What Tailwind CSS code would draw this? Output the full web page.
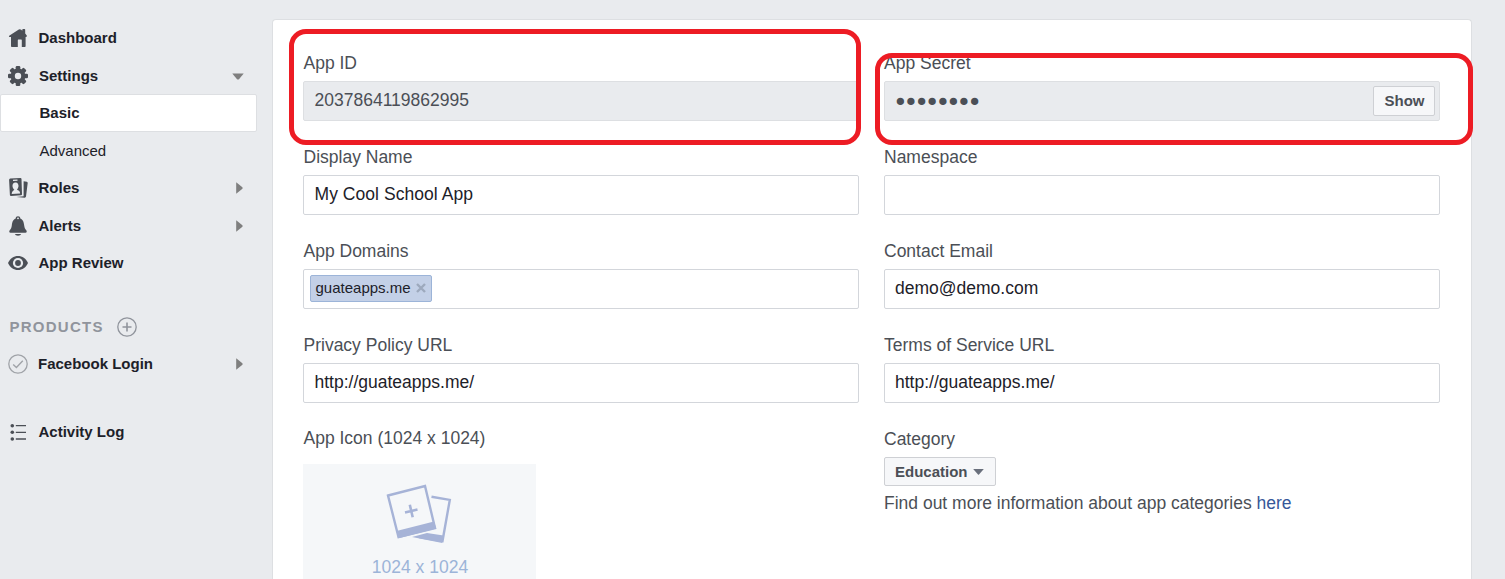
<!DOCTYPE html>
<html lang="en">
<head>
<meta charset="utf-8">
<title>Settings - Basic</title>
<script src="https://cdn.jsdelivr.net/npm/@tailwindcss/browser@4"></script>
</head>
<body class="relative flex h-[579px] w-[1505px] overflow-hidden bg-[#e9ebee] font-['Liberation_Sans',Arial,sans-serif] text-[17.5px] text-[#4b4f56]">

<nav class="w-[257px] shrink-0 pt-[19px] text-[15px] font-bold text-[#1d2129]">
  <a class="flex h-[38px] items-center gap-[10.5px] pl-2">
    <svg class="size-5" viewBox="0 0 20 20" fill="#4b4f56"><path d="M10.8 1.6Q12 .8 13.2 1.8L14.3 2.8V1.8Q14.3 1 15.1 1H16.5Q17.2 1 17.2 1.8V5.4L18.8 7.6Q19.2 8.9 18 8.9H17.6V18.2Q17.6 19 16.8 19H13.8V12.2Q13.8 11.6 13.2 11.6H10.3Q9.8 11.6 9.8 12.2V19H3.9Q3 19 3 18.2V9H1.5Q.4 8.7 1.2 7.7Z"/></svg>
    Dashboard
  </a>
  <a class="flex h-[37px] items-center gap-[11px] pl-2 pr-[13px] pt-px">
    <svg class="size-5" viewBox="0 0 20 20"><g fill="#4b4f56"><rect x="7.7" y="0" width="4.6" height="20" rx="1.2"/><rect x="7.7" y="0" width="4.6" height="20" rx="1.2" transform="rotate(45 10 10)"/><rect x="7.7" y="0" width="4.6" height="20" rx="1.2" transform="rotate(90 10 10)"/><rect x="7.7" y="0" width="4.6" height="20" rx="1.2" transform="rotate(135 10 10)"/><circle cx="10" cy="10" r="7.4"/></g><circle cx="10" cy="10" r="3.2" fill="#e9ebee"/></svg>
    <span class="grow">Settings</span>
    <svg class="h-[7px] w-3" viewBox="0 0 12 7" fill="#7f7f7f"><path d="M.3.5H11.7L7 6.2Q6 7 5 6.2Z"/></svg>
  </a>
  <a class="flex h-[38px] items-center rounded-[2px] border border-[#dddfe2] bg-white pl-[38.5px]">Basic</a>
  <a class="flex h-[37px] items-center pl-[39.5px] pt-[2px] font-normal">Advanced</a>
  <a class="flex h-[38px] items-center gap-[10.5px] pl-2 pr-[14px]">
    <svg class="size-5" viewBox="0 0 20 20"><path d="M2.2.6 12.4 0Q13.5 0 13.5 1L14 16.3Q14 17.2 13 17.3L3 18Q2 18 1.9 17L1.1 2Q1.1.8 2.2.6Z" fill="#4b4f56"/><path d="M5 2.4 9.5 2.1" stroke="#e9ebee" stroke-width="1.3"/><path d="M7.4 4.4C9.6 4.2 10.7 6 10.5 8.3 10.3 9.9 9.5 11 9 11.6 10.2 12.8 12 12.8 12.1 15.4L3.7 16C3.7 13.5 5.3 13 6.3 11.8 5.3 11 4.5 9.6 4.5 8.1 4.3 5.9 5.6 4.5 7.4 4.4Z" fill="#e9ebee"/><path d="M15.6 3.2 18.8 3.7Q19.8 3.9 19.7 5L18 18.6Q17.8 19.8 16.6 19.7L8.5 19 15.6 18.2Z" fill="#4b4f56"/></svg>
    <span class="grow">Roles</span>
    <svg class="h-3 w-[7px]" viewBox="0 0 7 12" fill="#7f7f7f"><path d="M.2.2 6.4 5.2Q6.9 6 6.4 6.8L.2 11.8Z"/></svg>
  </a>
  <a class="flex h-[37px] items-center gap-[10.5px] pl-2 pr-[14px] pt-px">
    <svg class="size-5" viewBox="0 0 20 20" fill="#4b4f56"><path d="M10 .2C11.4.2 12.3 1 12.3 2.5 15.3 3.8 15.8 6.4 16.2 9.5 16.5 12 17 12.8 18.3 14.2 19.1 15.4 18.8 16.8 17.5 16.8H2.5C1.2 16.8.9 15.4 1.7 14.2 3 12.8 3.5 12 3.8 9.5 4.2 6.4 4.7 3.8 7.7 2.5 7.7 1 8.6.2 10 .2Z"/><circle cx="10" cy="2.3" r=".9" fill="#e9ebee"/><path d="M6.8 17.9H13.2Q12.6 19.7 10 19.7T6.8 17.9Z"/></svg>
    <span class="grow">Alerts</span>
    <svg class="h-3 w-[7px]" viewBox="0 0 7 12" fill="#7f7f7f"><path d="M.2.2 6.4 5.2Q6.9 6 6.4 6.8L.2 11.8Z"/></svg>
  </a>
  <a class="flex h-[38px] items-center gap-[10.5px] pl-2">
    <svg class="size-5" viewBox="0 0 20 20"><path d="M0 10C2 5.4 5.8 3 10 3S18 5.4 20 10C18 14.6 14.2 17 10 17S2 14.6 0 10Z" fill="#4b4f56"/><circle cx="10" cy="10" r="5.1" fill="#e9ebee"/><circle cx="10" cy="10" r="2.9" fill="#4b4f56"/></svg>
    App Review
  </a>
  <div class="mt-[26px] flex h-[37.5px] items-center gap-[13px] pl-[9.5px] tracking-[1.25px] text-[#90949c]">
    PRODUCTS
    <svg class="size-5" viewBox="0 0 20 20" fill="none" stroke="#90949c"><circle cx="10" cy="10" r="9.2" stroke-width="1.3"/><path d="M10 5.5V14.5M5.5 10H14.5" stroke-width="1.6"/></svg>
  </div>
  <a class="flex h-[37.5px] items-center gap-[10px] pl-2 pr-[14px]">
    <svg class="size-5" viewBox="0 0 20 20" fill="none" stroke="#a0a3a8"><circle cx="10" cy="10" r="9.2" stroke-width="1.3"/><path d="M5.2 10.5 8.4 13.5 14.8 6.8" stroke-width="1.4"/></svg>
    <span class="grow">Facebook Login</span>
    <svg class="h-3 w-[7px]" viewBox="0 0 7 12" fill="#7f7f7f"><path d="M.2.2 6.4 5.2Q6.9 6 6.4 6.8L.2 11.8Z"/></svg>
  </a>
  <a class="mt-[30.5px] flex h-[37.5px] items-center gap-[10.5px] pl-2">
    <svg class="size-5" viewBox="0 0 20 20" fill="#4b4f56"><circle cx="4.3" cy="3.7" r="1.8"/><circle cx="4.3" cy="10.3" r="1.8"/><circle cx="4.3" cy="17" r="1.8"/><path d="M7.8 3.7H18M7.8 10.3H18M7.8 17H18" stroke="#4b4f56" stroke-width="1.3"/></svg>
    Activity Log
  </a>
</nav>

<main class="ml-[15px] mt-[19px] h-[560px] w-[1200px] shrink-0 overflow-hidden rounded-t-[4px] border border-b-0 border-[#dddfe2] bg-white pl-[30px] pt-[24px]">
  <div class="grid grid-cols-[556px_556px] gap-x-[25px]">
    <div class="h-[94px]">
      <div class="h-[38px] -mb-px pl-[0.5px] leading-[39px]">App ID</div>
      <div class="h-10 rounded-[2px] border border-[#dddfe2] bg-[#e9ebee] px-[10.5px] leading-[37px]">2037864119862995</div>
    </div>
    <div class="h-[94px]">
      <div class="h-[38px] -mb-px leading-[39px]">App Secret</div>
      <div class="flex h-10 items-center justify-between rounded-[2px] border border-[#dddfe2] bg-[#e9ebee] pl-[8px] pr-1">
        <span class="pt-[3px] font-['DejaVu_Sans',sans-serif] text-[25px] leading-[30px] tracking-[-4.15px]">••••••••</span>
        <button class="h-[30px] w-[62px] rounded-[2px] border border-[#ced0d4] bg-[#f6f7f9] pl-px text-[15px] font-bold">Show</button>
      </div>
    </div>
    <div class="h-[94px]">
      <div class="h-[38px] -mb-px pl-[0.5px] leading-[39px]">Display Name</div>
      <div class="h-10 rounded-[2px] border border-[#d3d6db] px-[10.5px] leading-[37px] tracking-[0.05px] text-[#1d2129]">My Cool School App</div>
    </div>
    <div class="h-[94px]">
      <div class="h-[38px] -mb-px leading-[39px]">Namespace</div>
      <div class="h-10 rounded-[2px] border border-[#d3d6db]"></div>
    </div>
    <div class="h-[94px]">
      <div class="h-[38px] -mb-px pl-[0.5px] leading-[39px]">App Domains</div>
      <div class="flex h-10 items-start rounded-[2px] border border-[#d3d6db] px-[6px] pt-[5px]">
        <span class="flex h-[27px] w-[122px] items-center justify-between rounded-[2px] border border-[#9cb4d8] bg-[#c3d0e7] pl-[4.5px] pr-[5px] text-[15px] text-[#1d2129]">guateapps.me
          <svg class="-mt-px size-[10px]" viewBox="0 0 10 10" stroke="#9da9bd" stroke-width="2.4"><path d="M1 1 9 9M9 1 1 9"/></svg>
        </span>
      </div>
    </div>
    <div class="h-[94px]">
      <div class="h-[38px] -mb-px leading-[39px]">Contact Email</div>
      <div class="h-10 rounded-[2px] border border-[#d3d6db] px-[10px] leading-[37px] text-[#1d2129]">demo@demo.com</div>
    </div>
    <div class="h-[94px]">
      <div class="h-[38px] -mb-px pl-[0.5px] leading-[39px]">Privacy Policy URL</div>
      <div class="h-10 rounded-[2px] border border-[#d3d6db] px-[10.5px] leading-[37px] text-[#1d2129]">http://guateapps.me/</div>
    </div>
    <div class="h-[94px]">
      <div class="h-[38px] -mb-px leading-[39px]">Terms of Service URL</div>
      <div class="h-10 rounded-[2px] border border-[#d3d6db] px-[10px] leading-[37px] text-[#1d2129]">http://guateapps.me/</div>
    </div>
    <div class="h-[160px]">
      <div class="h-[44px] pl-[0.5px] leading-[36px]">App Icon (1024 x 1024)</div>
      <div class="flex h-[116px] w-[233px] flex-col items-center bg-[#f5f7f9] pt-[20px] text-[#9cb4d8]">
        <svg class="-ml-px h-[60px] w-[66px] shrink-0" viewBox="0 0 66 60"><path d="M45.5 12.7 63.8 15.9 56.5 57 33 53" fill="none" stroke="#a6b3d7" stroke-width="2.4"/><path d="M26 53 41 49 57.5 51.5 56.3 59Z" fill="#a6b3d7"/><path d="M2 11.5 39 2 49 44 12.5 53Z" fill="#f5f7f9" stroke="#a6b3d7" stroke-width="2.4"/><path d="M10.5 47 48 37.5 50.3 44.5 12.5 54.2Z" fill="#a6b3d7"/><path d="M19 28.5 31.5 25.5M23.8 20.8 26.7 33.2" stroke="#a6b3d7" stroke-width="2.6"/></svg>
        <span class="mt-[9px] shrink-0 pl-px leading-[29px]">1024 x 1024</span>
      </div>
    </div>
    <div>
      <div class="h-[38px] -mb-px leading-[39px]">Category</div>
      <button class="flex h-[29px] w-[112px] items-center gap-[5px] rounded-[2px] border border-[#ced0d4] bg-[#f6f7f9] pl-[10px] pt-px text-[15px] font-bold">Education
        <svg class="h-[6px] w-[11px]" viewBox="0 0 11 6" fill="#696f7c"><path d="M.2 0H10.8L6 5.5Q5.5 6 5 5.5Z"/></svg>
      </button>
      <div class="leading-[34px]">Find out more information about app categories <a class="text-[#365899]">here</a></div>
    </div>
  </div>
</main>

<!-- highlight outlines over the form -->
<div class="absolute left-[289px] top-[29px] h-[116px] w-[572px] rounded-[17px] border-5 border-[#ed1c24]"></div>
<div class="absolute left-[875px] top-[53px] h-[92px] w-[598px] rounded-[17px] border-5 border-[#ed1c24]"></div>
</body>
</html>
